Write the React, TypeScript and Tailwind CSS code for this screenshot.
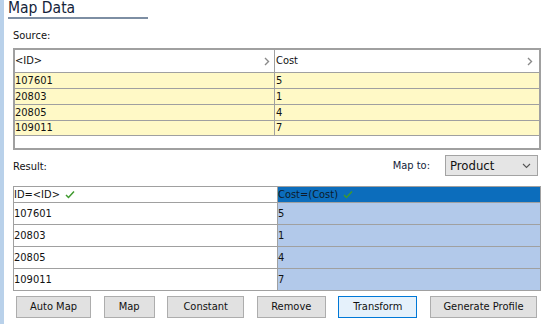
import React from 'react'

const sourceRows = [
  ['107601', '5'],
  ['20803', '1'],
  ['20805', '4'],
  ['109011', '7'],
]

const buttons = [
  { label: 'Auto Map', w: 'w-[75px]' },
  { label: 'Map', w: 'w-[51px]' },
  { label: 'Constant', w: 'w-[77px]' },
  { label: 'Remove', w: 'w-[69px]' },
  { label: 'Transform', w: 'w-[79px]', focused: true },
  { label: 'Generate Profile', w: 'w-[107px]' },
]

function ChevronRight() {
  return (
    <svg width="6" height="9" viewBox="0 0 6 9" className="shrink-0">
      <path d="M1 1 L4.5 4.5 L1 8" fill="none" stroke="#8a8a8a" strokeWidth="1.4" />
    </svg>
  )
}

function Check() {
  return (
    <svg width="10" height="9" viewBox="0 0 10 9" className="shrink-0">
      <path d="M1 5 L3.5 7.5 L9 1.5" fill="none" stroke="#3f9a2e" strokeWidth="1.5" />
    </svg>
  )
}

export default function App() {
  return (
    <div className="w-[544px] h-[324px] flex bg-white text-[11px] leading-[14px] text-[#111] font-['DejaVu_Sans_Condensed','Liberation_Sans',sans-serif] overflow-hidden">
      <div className="w-[4px] shrink-0 bg-[#b9d1ea]" />

      <div className="flex-1 flex flex-col pl-[4px] pr-[3px]">
        <div className="w-[140px] h-[19px] border-b-2 border-[#7d8ea3] text-[15.5px] leading-[17px] text-[#14233a]">
          Map Data
        </div>

        <div className="pl-[5px] flex flex-col">
          <div className="mt-[10px] h-[14px]">Source:</div>

          {/* source grid */}
          <div className="mt-[5px] h-[102px] border-2 border-[#a0a0a0] flex flex-col">
            <div className="grid grid-cols-[260px_1fr] h-[22px] shrink-0">
              <div className="flex items-center justify-between border-r border-[#a0a0a0] pr-[4px]">
                <span>&lt;ID&gt;</span>
                <ChevronRight />
              </div>
              <div className="flex items-center justify-between pl-[1px] pr-[6px]">
                <span>Cost</span>
                <ChevronRight />
              </div>
            </div>
            {sourceRows.map(([id, cost], i) => (
              <div key={i} className={`grid grid-cols-[260px_1fr] h-[16px] shrink-0 border-t border-[#a0a0a0] bg-[#fff9c6] ${i === sourceRows.length - 1 ? 'border-b' : ''}`}>
                <div className="flex items-center border-r border-[#a0a0a0]">{id}</div>
                <div className="flex items-center pl-[1px]">{cost}</div>
              </div>
            ))}
          </div>

          {/* result toolbar */}
          <div className="h-[36px] flex items-start pt-[5px]">
            <div className="mt-[5px]">Result:</div>
            <div className="flex-1" />
            <div className="mt-[4px] mr-[15px] text-[#14233a]">Map to:</div>
            <div className="w-[93px] h-[21px] mr-[3px] bg-[#e5e5e5] border border-[#a3a3a3] flex items-center justify-between pl-[4px] pr-[6px] text-[13px]">
              <span>Product</span>
              <svg width="9" height="6" viewBox="0 0 9 6">
                <path d="M1 1 L4.5 4.5 L8 1" fill="none" stroke="#555" strokeWidth="1.1" />
              </svg>
            </div>
          </div>

          {/* result grid */}
          <div className="border border-[#a0a0a0] flex flex-col">
            <div className="grid grid-cols-[264px_1fr] h-[15px]">
              <div className="flex items-center gap-[5px] border-r border-[#a0a0a0]">
                <span>ID=&lt;ID&gt;</span>
                <Check />
              </div>
              <div className="flex items-center gap-[5px] bg-[#0c6dbc] text-[#0d1b2a]">
                <span>Cost=(Cost)</span>
                <Check />
              </div>
            </div>
            {sourceRows.map(([id, cost], i) => (
              <div key={i} className="grid grid-cols-[264px_1fr] h-[22px] border-t border-[#a0a0a0]">
                <div className="flex items-center border-r border-[#a0a0a0] bg-white">{id}</div>
                <div className="flex items-center bg-[#b2c9ea]">{cost}</div>
              </div>
            ))}
          </div>

          {/* buttons */}
          <div className="mt-[5px] flex justify-between pl-[3px] pr-[4px]">
            {buttons.map(b => (
              <button
                key={b.label}
                className={`${b.w} h-[22px] border text-[11px] leading-[14px] text-[#111] ${
                  b.focused ? 'bg-[#e5f1fb] border-[#0078d7]' : 'bg-[#e1e1e1] border-[#adadad]'
                }`}
              >
                {b.label}
              </button>
            ))}
          </div>
        </div>
      </div>
    </div>
  )
}
